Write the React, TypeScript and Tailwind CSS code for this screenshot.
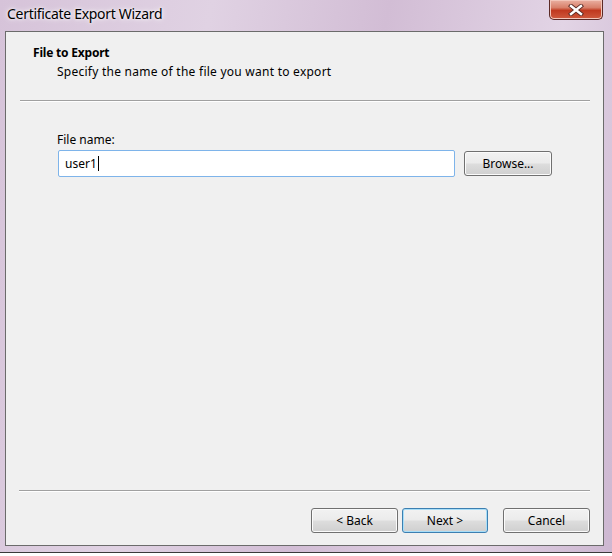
import React from 'react'

const font = { fontFamily: '"Noto Sans", "Open Sans", "Liberation Sans", sans-serif' }

function Button({ label, isDefault }: { label: string; isDefault?: boolean }) {
  return (
    <button
      className={`h-[25px] rounded-[3px] border text-[12px] text-black bg-[linear-gradient(#f2f2f2_0%,#ebebeb_48%,#dddddd_52%,#cfcfcf_100%)] ${
        isDefault
          ? 'border-[#3c7fb1] shadow-[inset_0_0_0_1px_#a8def8]'
          : 'border-[#707070] shadow-[inset_0_0_0_1px_#fbfbfb]'
      }`}
    >
      {label}
    </button>
  )
}

function CloseButton() {
  return (
    <div className="mr-[9px] w-[54px] h-[20px] rounded-b-[5px] border border-t-0 border-[#5b2a26] bg-[linear-gradient(#eab0a2_0%,#d8806a_40%,#c0391f_55%,#cf5a3e_100%)] shadow-[inset_0_0_0_1px_#f3c6ba] flex items-center justify-center">
      <svg width="16" height="12" viewBox="0 0 16 12">
        <path d="M3 2 L13 10 M13 2 L3 10" stroke="#5a2a24" strokeWidth="4.2" strokeLinecap="square" />
        <path d="M3 2 L13 10 M13 2 L3 10" stroke="#ffffff" strokeWidth="2.4" strokeLinecap="square" />
      </svg>
    </div>
  )
}

export default function App() {
  return (
    <div className="w-[612px] h-[556px] bg-white overflow-hidden" style={font}>
      <div className="h-[553px] flex flex-col border-b border-[#3a3a3a] bg-[linear-gradient(100deg,#d6c3d9_0%,#e0d2e3_30%,#d2bdd5_55%,#e2d4e5_80%,#cdb7d1_100%)]">
        {/* title bar */}
        <div className="h-[31px] flex items-start justify-between shrink-0">
          <span className="pl-[7px] pt-[4px] text-[14px] tracking-[-0.3px] text-black leading-[20px] [text-shadow:0_0_6px_#ffffff,0_0_3px_#ffffff]">
            Certificate Export Wizard
          </span>
          <CloseButton />
        </div>

        {/* client area */}
        <div className="flex-1 ml-[5px] mr-[8px] mb-[6px] border border-[#6b6b6b] bg-[#f0f0f0] flex flex-col text-[12px] text-black leading-[16px]">
          <div className="pt-[13px]">
            <p className="pl-[27px] font-bold tracking-[-0.2px]">File to Export</p>
            <p className="pl-[51px] pt-[3px] tracking-[0.25px]">Specify the name of the file you want to export</p>
          </div>
          <div className="mt-[20px] ml-[14px] mr-[13px] h-[2px] border-t border-[#a0a0a0] border-b border-b-white" />

          <p className="mt-[30px] pl-[51px]">File name:</p>
          <div className="mt-[2px] ml-[52px] flex items-start gap-[9px]">
            <div className="w-[397px] h-[27px] border border-[#7eb4ea] rounded-[2px] bg-white flex items-center pl-[6px]">
              <span>user1</span>
              <span className="ml-[1px] w-px h-[15px] bg-black" />
            </div>
            <div className="mt-[1px] w-[88px] flex flex-col">
              <Button label="Browse..." />
            </div>
          </div>

          <div className="flex-1" />

          <div className="ml-[13px] mr-[13px] h-[2px] border-t border-[#a0a0a0] border-b border-b-white" />
          <div className="mt-[16px] mb-[12px] mr-[13px] flex justify-end">
            <div className="w-[87px] flex flex-col">
              <Button label="< Back" />
            </div>
            <div className="ml-[4px] w-[86px] flex flex-col">
              <Button label="Next >" isDefault />
            </div>
            <div className="ml-[15px] w-[87px] flex flex-col">
              <Button label="Cancel" />
            </div>
          </div>
        </div>
      </div>
    </div>
  )
}
